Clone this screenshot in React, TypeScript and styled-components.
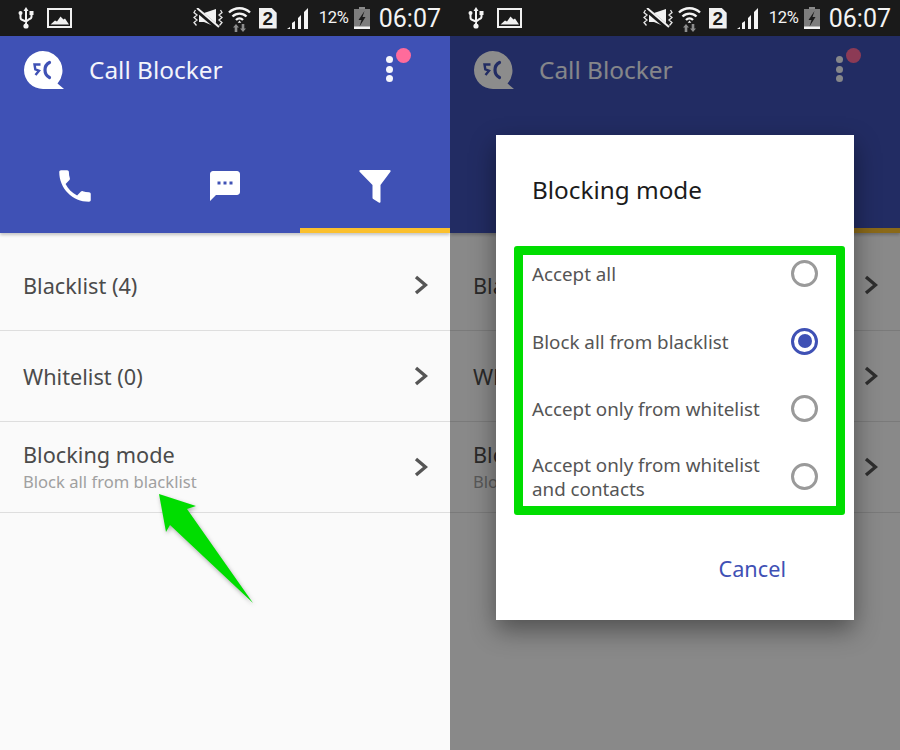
import React from "react";
import styled, { createGlobalStyle } from "styled-components";

const Global = createGlobalStyle`
  html, body { margin: 0; padding: 0; background: #fafafa; }
  body { font-family: "Noto Sans", "Open Sans", sans-serif; }
  * { box-sizing: border-box; }
`;

const Page = styled.div`
  display: grid;
  grid-template-columns: 450px 450px;
  width: 900px;
  height: 750px;
  overflow: hidden;
`;

const Phone = styled.section`
  position: relative;
  display: flex;
  flex-direction: column;
  height: 750px;
  background: #fafafa;
  overflow: hidden;
`;

const StatusBar = styled.div`
  display: flex;
  align-items: center;
  height: 36px;
  flex: none;
  padding: 0 9px 0 18px;
  background: #1a1a1a;
  color: #f4f4f4;
`;

const StatusIcon = styled.svg<{ $gap?: number }>`
  display: block;
  flex: none;
  margin-left: ${(p) => p.$gap ?? 0}px;
`;

const Spacer = styled.div`
  flex: 1;
`;

const SimBadge = styled.div`
  flex: none;
  width: 18px;
  height: 21px;
  margin-left: 8px;
  display: flex;
  align-items: center;
  justify-content: center;
  background: #f0f0f0;
  color: #1a1a1a;
  font: 700 19px/21px "Liberation Sans", sans-serif;
  clip-path: polygon(0 0, 70% 0, 100% 25%, 100% 100%, 0 100%);
`;

const Percent = styled.span`
  flex: none;
  margin-left: 10px;
  font: 400 16.5px/20px "Roboto", sans-serif;
  letter-spacing: -0.2px;
`;

const Time = styled.span`
  flex: none;
  margin-left: 9px;
  padding-top: 1px;
  font: 400 25px/30px "Roboto", sans-serif;
`;

const Header = styled.header`
  position: relative;
  flex: none;
  height: 197px;
  display: flex;
  flex-direction: column;
  background: #3f51b5;
  box-shadow: 0 2px 3px rgba(0, 0, 0, 0.22);
  z-index: 1;
`;

const TopRow = styled.div`
  display: flex;
  align-items: center;
  height: 68px;
  padding-left: 23px;
`;

const AppTitle = styled.h1`
  margin: 0 0 0 25px;
  flex: 1;
  color: #f3f4fb;
  font: 400 24.4px/32px "Noto Sans", sans-serif;
`;

const Menu = styled.div`
  position: relative;
  display: flex;
  flex-direction: column;
  gap: 2.5px;
  width: 7px;
  margin-right: 57px;
  margin-top: -2px;
`;

const MenuDot = styled.span`
  width: 7px;
  height: 7px;
  border-radius: 50%;
  background: #f5f6fc;
`;

const Badge = styled.span`
  position: absolute;
  left: 10px;
  top: -8px;
  width: 15px;
  height: 15px;
  border-radius: 50%;
  background: #ff6b9b;
`;

const Tabs = styled.nav`
  display: grid;
  grid-template-columns: repeat(3, 150px);
  margin-top: auto;
  height: 89px;
`;

const Tab = styled.div<{ $active?: boolean }>`
  display: flex;
  align-items: center;
  justify-content: center;
  border-bottom: 5px solid ${(p) => (p.$active ? "#fbc02d" : "transparent")};
`;

const List = styled.div`
  flex: 1;
  padding-top: 7px;
`;

const Row = styled.div`
  display: flex;
  align-items: center;
  justify-content: space-between;
  height: 91px;
  padding: 0 22px 0 23px;
  border-bottom: 1px solid #dedede;
`;

const RowText = styled.div`
  display: flex;
  flex-direction: column;
  margin-top: 1px;
`;

const RowTitle = styled.span`
  color: #4b4b4b;
  font: 400 21.7px/28px "Noto Sans", sans-serif;
`;

const RowSub = styled.span`
  color: #a0a0a0;
  font: 400 16.6px/24px "Noto Sans", sans-serif;
  margin-top: 1px;
`;

const Pointer = styled.svg`
  position: absolute;
  left: 150px;
  top: 485px;
  filter: drop-shadow(1px 2px 2px rgba(0, 0, 0, 0.3));
`;

const Scrim = styled.div`
  position: absolute;
  left: 0;
  right: 0;
  top: 36px;
  bottom: 0;
  background: rgba(0, 0, 0, 0.45);
  z-index: 2;
`;

const Dialog = styled.div`
  position: absolute;
  left: 46px;
  top: 135px;
  width: 358px;
  height: 485px;
  display: flex;
  flex-direction: column;
  background: #fff;
  box-shadow: 0 10px 24px rgba(0, 0, 0, 0.42);
  z-index: 3;
`;

const DialogTitle = styled.h2`
  margin: 0;
  height: 105px;
  padding: 36px 36px 0;
  color: #1b1b1b;
  font: 400 24.3px/38px "Noto Sans", sans-serif;
`;

const Options = styled.div`
  display: flex;
  flex-direction: column;
`;

const Option = styled.div`
  display: flex;
  align-items: center;
  justify-content: space-between;
  height: 67.5px;
  padding: 0 36px;
`;

const OptionLabel = styled.span`
  width: 240px;
  padding-top: 1px;
  color: #555;
  font: 400 18.8px/24px "Noto Sans", sans-serif;
`;

const Radio = styled.span<{ $on?: boolean }>`
  flex: none;
  width: 27px;
  height: 27px;
  display: flex;
  align-items: center;
  justify-content: center;
  border-radius: 50%;
  border: 3px solid ${(p) => (p.$on ? "#3f51b5" : "#9a9a9a")};
  &::after {
    content: "";
    width: 14px;
    height: 14px;
    border-radius: 50%;
    background: ${(p) => (p.$on ? "#3f51b5" : "transparent")};
  }
`;

const Actions = styled.div`
  display: flex;
  justify-content: flex-end;
  padding: 44px 68px 0 0;
`;

const CancelButton = styled.span`
  color: #3f51b5;
  font: 400 21.7px/30px "Noto Sans", sans-serif;
`;

const Annotation = styled.div`
  position: absolute;
  left: 18px;
  top: 111px;
  width: 331px;
  height: 269px;
  border: 9px solid #00dd00;
  border-radius: 3px;
`;

const UsbIcon = () => (
  <StatusIcon width="16" height="22" viewBox="0 0 16 22" fill="none">
    <path d="M8 3v15M2.500 7v3.500q0 2 2 2.500L8 14.500l3.500-2.500q2-.5 2-2.500V6" stroke="#f4f4f4" strokeWidth="2" />
    <path d="M8 0l2.500 4h-5z" fill="#f4f4f4" />
    <circle cx="8" cy="19" r="2.600" fill="#f4f4f4" />
    <circle cx="2.500" cy="6" r="2" fill="#f4f4f4" />
    <rect x="11.500" y="4" width="4" height="4" fill="#f4f4f4" />
  </StatusIcon>
);

const PictureIcon = () => (
  <StatusIcon $gap={13} width="25" height="20" viewBox="0 0 25 20" fill="none">
    <rect x="1" y="1" width="23" height="18" stroke="#f0f0f0" strokeWidth="2" />
    <path d="M3.500 16.500l4.500-4 2 1 3.500-5 3 3 1.500-1 4 6z" fill="#f0f0f0" />
  </StatusIcon>
);

const MuteIcon = () => (
  <StatusIcon width="30" height="20" viewBox="0 0 30 20" fill="none">
    <path d="M2.500 2L1 4.500l3 2.500-3 2.500 3 2.500-3 2.500 2.500 3M27.500 2L29 4.500l-3 2.500 3 2.500-3 2.500 3 2.500-2.500 3" stroke="#e8e8e8" strokeWidth="1.300" />
    <path d="M6 5h5l12-4v18L11 14H6z" fill="#f2f2f2" />
    <path d="M4 2l21 18" stroke="#1a1a1a" strokeWidth="4.500" />
    <path d="M4 0l22 19" stroke="#f2f2f2" strokeWidth="2" />
  </StatusIcon>
);

const WifiIcon = () => (
  <StatusIcon $gap={5} width="23" height="27" viewBox="0 0 23 27" fill="none">
    <path d="M1 7.500a15 15 0 0 1 21 0M4.500 11.500a10 10 0 0 1 14 0M8 15a5 5 0 0 1 7 0" stroke="#f4f4f4" strokeWidth="2.400" />
    <path d="M11.500 15.500l1.800 2.200h-3.600z" fill="#f4f4f4" />
    <path d="M8 19l3 3.500H9.300V27H6.700v-4.500H5zM15 27l-3-3.500h1.700V19h2.600v4.500H18z" fill="#8d8d8d" />
  </StatusIcon>
);

const SignalIcon = () => (
  <StatusIcon $gap={10} width="22" height="21" viewBox="0 0 22 21" fill="#f4f4f4">
    <path d="M0 21l3-2v2zM5 21v-6l3-2v8zM11 21V10l3-3v14zM17 21V4l4-4v21z" />
  </StatusIcon>
);

const BatteryIcon = () => (
  <StatusIcon $gap={5} width="16" height="22" viewBox="0 0 16 22">
    <rect x="5" y="0" width="6" height="2" fill="#8a8a8a" />
    <rect x="0" y="2" width="16" height="20" fill="#7d7d7d" />
    <rect x="0" y="19.500" width="16" height="2.500" fill="#f2f2f2" />
    <path d="M10.500 4L4.500 13h3l-2 6.500L11.500 10h-3z" fill="#1a1a1a" />
  </StatusIcon>
);

const Status = () => (
  <StatusBar>
    <UsbIcon />
    <PictureIcon />
    <Spacer />
    <MuteIcon />
    <WifiIcon />
    <SimBadge>2</SimBadge>
    <SignalIcon />
    <Percent>12%</Percent>
    <BatteryIcon />
    <Time>06:07</Time>
  </StatusBar>
);

const Logo = () => (
  <svg width="41" height="38" viewBox="0 0 41 38">
    <path d="M20 0a19.500 19.500 0 0 1 14.500 32.500L41 38H20A19 19 0 0 1 20 0z" fill="#fff" />
    <path d="M26.500 11.500c-6 3-6 12 0 15" stroke="#3f51b5" strokeWidth="3.200" fill="none" strokeLinecap="round" />
    <path d="M17.500 13.500H11.500l.8 4.800 3.700 1.400-3.500 4.300" stroke="#3f51b5" strokeWidth="2.400" fill="none" />
  </svg>
);

const Chevron = () => (
  <svg width="14" height="20" viewBox="0 0 14 20" fill="none">
    <path d="M2 2l9.500 8L2 18" stroke="#555" strokeWidth="3.400" />
  </svg>
);

const CallIcon = () => (
  <svg width="42" height="42" viewBox="0 0 24 24" fill="#fff">
    <path d="M6.620 10.790c1.440 2.830 3.760 5.140 6.590 6.590l2.200-2.200c.27-.27.67-.36 1.020-.24 1.120.37 2.330.57 3.570.57.55 0 1 .45 1 1V20c0 .55-.45 1-1 1-9.390 0-17-7.610-17-17 0-.55.45-1 1-1h3.500c.55 0 1 .45 1 1 0 1.250.2 2.450.57 3.570.11.35.03.74-.25 1.020l-2.200 2.200z" />
  </svg>
);

const MessageIcon = () => (
  <svg width="36" height="36" viewBox="0 0 24 24" fill="#fff">
    <path d="M20 2H4c-1.100 0-1.990.9-1.990 2L2 22l4-4h14c1.100 0 2-.9 2-2V4c0-1.100-.9-2-2-2zM9 11H7V9h2v2zm4 0h-2V9h2v2zm4 0h-2V9h2v2z" />
  </svg>
);

const FilterIcon = () => (
  <svg width="32" height="33" viewBox="0 0 32 33" fill="#fff">
    <path d="M1.500 0h29c1 0 1.500 1 .9 1.800L21.500 15v17c0 .7-.7 1-1.300.7l-6-3.700c-.5-.3-.7-.8-.7-1.300V15L.6 1.800C0 1 .5 0 1.500 0z" />
  </svg>
);

const Chrome = () => (
  <>
    <Status />
    <Header>
      <TopRow>
        <Logo />
        <AppTitle>Call Blocker</AppTitle>
        <Menu>
          <MenuDot />
          <MenuDot />
          <MenuDot />
          <Badge />
        </Menu>
      </TopRow>
      <Tabs>
        <Tab><CallIcon /></Tab>
        <Tab><MessageIcon /></Tab>
        <Tab $active><FilterIcon /></Tab>
      </Tabs>
    </Header>
    <List>
      <Row>
        <RowText><RowTitle>Blacklist (4)</RowTitle></RowText>
        <Chevron />
      </Row>
      <Row>
        <RowText><RowTitle>Whitelist (0)</RowTitle></RowText>
        <Chevron />
      </Row>
      <Row>
        <RowText>
          <RowTitle>Blocking mode</RowTitle>
          <RowSub>Block all from blacklist</RowSub>
        </RowText>
        <Chevron />
      </Row>
    </List>
  </>
);

const modes = [
  { label: "Accept all" },
  { label: "Block all from blacklist", on: true },
  { label: "Accept only from whitelist" },
  { label: "Accept only from whitelist and contacts" },
];

export default function App() {
  return (
    <>
      <Global />
      <Page>
        <Phone>
          <Chrome />
          <Pointer width="110" height="125" viewBox="0 0 110 125">
            <path d="M9 9L46 21L37 24L103 118L20 40L16 47z" fill="#00dd00" />
          </Pointer>
        </Phone>
        <Phone>
          <Chrome />
          <Scrim />
          <Dialog>
            <DialogTitle>Blocking mode</DialogTitle>
            <Options>
              {modes.map((m) => (
                <Option key={m.label}>
                  <OptionLabel>{m.label}</OptionLabel>
                  <Radio $on={m.on} />
                </Option>
              ))}
            </Options>
            <Actions>
              <CancelButton>Cancel</CancelButton>
            </Actions>
            <Annotation />
          </Dialog>
        </Phone>
      </Page>
    </>
  );
}
